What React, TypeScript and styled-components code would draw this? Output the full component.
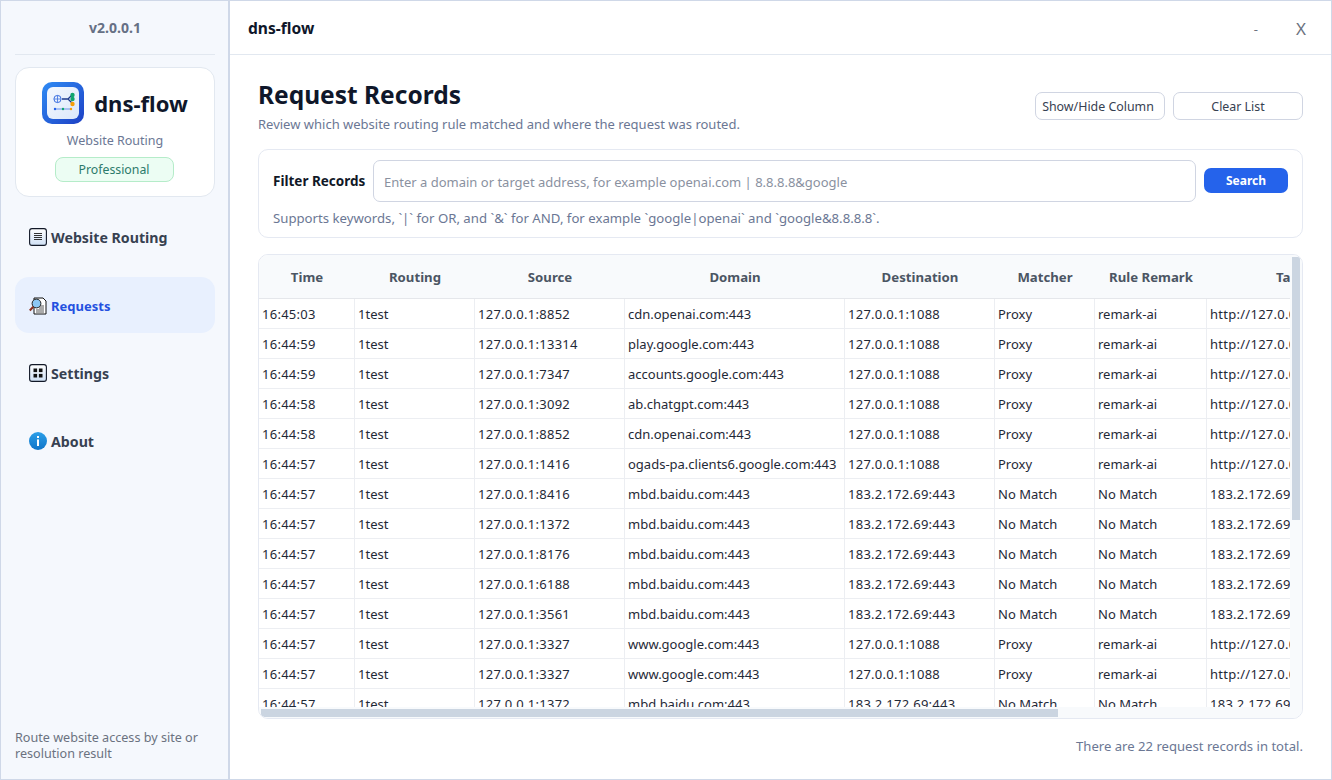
import React from "react";
import styled, { createGlobalStyle } from "styled-components";

const Global = createGlobalStyle`
  html, body { margin: 0; padding: 0; height: 100%; background: #fff; }
  #root { height: 100%; }
  * { box-sizing: border-box; }
  body { font-family: "Noto Sans", "Liberation Sans", sans-serif; color: #1f2937; }
`;

const Window = styled.div`
  width: 1332px; height: 780px; display: flex; overflow: hidden;
  border: 1px solid #cfd8e8; background: #fff;
`;
const Sidebar = styled.aside`
  width: 229px; flex: none; display: flex; flex-direction: column; padding: 0 13px 17px 14px;
  background: #f5f8fd; border-right: 2px solid #cfd8e8;
`;
const Version = styled.div`
  height: 54px; flex: none; display: flex; align-items: center; justify-content: center;
  font-size: 14px; font-weight: 700; color: #667085; border-bottom: 1px solid #e2e8f0;
`;
const BrandCard = styled.section`
  margin-top: 12px; height: 130px; flex: none; background: #fff; border: 1px solid #e2e8f0; border-radius: 14px;
  display: flex; flex-direction: column; align-items: center; padding-top: 14px;
`;
const BrandRow = styled.div`display: flex; align-items: center; gap: 10px; height: 42px;`;
const BrandName = styled.div`font-size: 22px; font-weight: 700; color: #0f172a; line-height: 1;`;
const BrandSub = styled.div`margin-top: 8px; font-size: 12.5px; line-height: 18px; color: #6b7794;`;
const Badge = styled.div`
  margin: 7px 2px 0 0; width: 119px; height: 25px; display: flex; align-items: center; justify-content: center;
  background: #ecfdf3; border: 1px solid #b5ecc9; border-radius: 8px; font-size: 12.3px; color: #2c7a6b;
`;
const Nav = styled.nav`margin-top: 12px; display: flex; flex-direction: column; gap: 12px;`;
const NavItem = styled.div<{ $active?: boolean }>`
  height: 56px; padding: ${(p) => (p.$active ? "2px" : "0")} 14px 0; border-radius: 14px;
  display: flex; align-items: center; gap: 4px;
  font-size: ${(p) => (p.$active ? "13px" : "14.2px")}; font-weight: 700;
  color: ${(p) => (p.$active ? "#2450e0" : "#374151")};
  background: ${(p) => (p.$active ? "#e8f0fe" : "transparent")};
`;
const SideNote = styled.div`margin-top: auto; font-size: 12.6px; line-height: 16px; color: #6b7280;`;

const Main = styled.main`flex: 1; min-width: 0; display: flex; flex-direction: column;`;
const TopBar = styled.header`
  height: 54px; flex: none; display: flex; align-items: center; padding: 0 25px 0 18px;
  border-bottom: 1px solid #e2e8f0;
`;
const TopTitle = styled.div`font-size: 15.6px; font-weight: 700; color: #0f172a;`;
const WinButtons = styled.div`margin-left: auto; display: flex; align-items: center; gap: 38px; color: #6b7280; padding-top: 2px;`;
const Minimize = styled.span`font-size: 13px;`;
const CloseX = styled.span`font-size: 17px;`;
const Page = styled.div`flex: 1; min-height: 0; display: flex; flex-direction: column; padding: 22px 28px 0 28px;`;
const Head = styled.div`height: 57px; flex: none; display: flex; justify-content: space-between;`;
const PageTitle = styled.h1`margin: 1px 0 0; font-size: 24.5px; line-height: 34px; font-weight: 700; color: #0f172a;`;
const PageSub = styled.p`margin: 3px 0 0; font-size: 13px; line-height: 18px; color: #6b7794;`;
const HeadButtons = styled.div`display: flex; gap: 8px; padding-top: 15px;`;
const GhostButton = styled.button<{ $offset?: boolean }>`
  width: 130px; height: 28px; padding: 0 ${(p) => (p.$offset ? "4px" : "0")} 0 0; background: #fff;
  border: 1px solid #d0d5e2; border-radius: 7px;
  font: 400 12.4px "Noto Sans", sans-serif; color: #374151;
`;
const FilterCard = styled.section`
  margin-top: 15px; height: 89px; flex: none; border: 1px solid #e5e9f2; border-radius: 10px; padding: 10px 14px 0;
`;
const FilterRow = styled.div`display: flex; align-items: center; height: 42px;`;
const FilterLabel = styled.label`width: 100px; flex: none; font-size: 13.5px; font-weight: 700; color: #111827;`;
const FilterInput = styled.input`
  flex: 1; min-width: 0; height: 42px; padding: 2px 10px 0; border: 1px solid #d0d5e2; border-radius: 7px; outline: none;
  font: 400 13px "Noto Sans", sans-serif;
  &::placeholder { color: #8a919f; opacity: 1; }
`;
const SearchButton = styled.button`
  margin: 0 0 1px 8px; width: 84px; height: 25px; flex: none; border: 0; border-radius: 7px; background: #2563eb;
  font: 700 12px "Noto Sans", sans-serif; color: #fff;
`;
const Hint = styled.div`margin-top: 7px; font-size: 13.2px; line-height: 18px; color: #6b7794;`;
const TableFrame = styled.section`
  margin-top: 16px; height: 465px; flex: none; border: 1px solid #e5e9f2; border-radius: 10px; overflow: hidden;
  display: grid; grid-template-columns: 1fr 12px; grid-template-rows: 1fr 11px; background: #fff;
`;
const TableScroll = styled.div`min-width: 0; min-height: 0; overflow: hidden;`;
const VTrack = styled.div`background: #f8fafc; padding: 2px 2px 0;`;
const HTrack = styled.div`background: #f8fafc; padding: 2px 0 0 2px;`;
const VThumb = styled.div`width: 8px; height: 263px; background: #cbd5e1;`;
const HThumb = styled.div`width: 797px; height: 8px; background: #cbd5e1;`;
const Table = styled.table`
  border-collapse: separate; border-spacing: 0; table-layout: fixed; width: 1128px;
`;
const Th = styled.th`
  height: 44px; padding: 0; background: #f8fafc;
  border-bottom: 1px solid #e5e7eb; font-size: 13.2px; font-weight: 700; color: #4b5563; text-align: center;
`;
const Td = styled.td<{ $num?: boolean }>`
  height: 30px; padding: 0 3px; border-right: 1px solid #eceef2; border-bottom: 1px solid #eceef2;
  font-size: 13px; color: #1f2937; white-space: nowrap; overflow: hidden;
  letter-spacing: ${(p) => (p.$num ? "0.27px" : "0")};
`;
const Total = styled.div`
  flex: 1; display: flex; align-items: center; justify-content: flex-end; padding-bottom: 7px;
  font-size: 13.1px; color: #6b7794;
`;

const LogoIcon = () => (
  <svg width="42" height="42" viewBox="0 0 42 42">
    <defs>
      <linearGradient id="lg" x1="0" y1="0" x2="1" y2="1">
        <stop offset="0" stopColor="#2f8cf5" />
        <stop offset="1" stopColor="#1d3fc4" />
      </linearGradient>
      <linearGradient id="li" x1="0" y1="0" x2="1" y2="1">
        <stop offset="0" stopColor="#f4f8fe" />
        <stop offset="1" stopColor="#dbe8fb" />
      </linearGradient>
    </defs>
    <rect width="42" height="42" rx="10" fill="url(#lg)" />
    <rect x="5" y="5" width="32" height="32" rx="6" fill="url(#li)" />
    <circle cx="15.5" cy="17" r="3.6" fill="none" stroke="#3b6fe0" strokeWidth="1" />
    <path d="M12 17h7M15.5 13.4v7.2" stroke="#3b6fe0" strokeWidth=".8" />
    <path d="M20 17h6l4-4M26 17l4 4" fill="none" stroke="#1e3a8a" strokeWidth="1.3" />
    <circle cx="30.5" cy="13" r="2.2" fill="#10a56e" />
    <circle cx="30.5" cy="17" r="2.2" fill="#10a56e" />
    <circle cx="30.5" cy="22" r="2.2" fill="#f59e0b" />
    <path d="M12 27h18" stroke="#4b7be5" strokeWidth=".8" />
    <circle cx="13" cy="27" r="1.2" fill="#2563eb" />
    <circle cx="21" cy="27" r="1.2" fill="#10a56e" />
    <circle cx="29" cy="27" r="1.2" fill="#f59e0b" />
  </svg>
);
const KeyFrame = ({ children }: { children: React.ReactNode }) => (
  <svg width="18" height="18" viewBox="0 0 18 18" style={{ flex: "none" }}>
    <defs>
      <linearGradient id="kf" x1="0" y1="0" x2="0" y2="1">
        <stop offset="0" stopColor="#fff" />
        <stop offset="1" stopColor="#cfe0f5" />
      </linearGradient>
    </defs>
    <rect x=".6" y=".6" width="16.8" height="16.8" rx="2.4" fill="url(#kf)" stroke="#111827" strokeWidth="1.1" />
    {children}
  </svg>
);
const RoutingIcon = () => (
  <KeyFrame>
    <path d="M5 5.5h8M5 7.5h8M5 9.5h8M5 11.5h8" stroke="#333" strokeWidth="1.1" />
  </KeyFrame>
);
const SettingsIcon = () => (
  <KeyFrame>
    <rect x="4.5" y="4.5" width="3.6" height="3.6" fill="#111" />
    <rect x="9.9" y="4.5" width="3.6" height="3.6" fill="#111" />
    <rect x="4.5" y="9.9" width="3.6" height="3.6" fill="#111" />
    <rect x="9.9" y="9.9" width="3.6" height="3.6" fill="#111" />
  </KeyFrame>
);
const RequestsIcon = () => (
  <svg width="18" height="18" viewBox="0 0 18 18" style={{ flex: "none" }}>
    <path d="M5 1h9l3 3v13H5z" fill="#fff" stroke="#111" strokeWidth="1" />
    <path d="M10 9h5M10 11h5M7 13h8M7 15h8" stroke="#444" strokeWidth=".9" />
    <circle cx="7.5" cy="6.5" r="4.4" fill="#8cc8f5" stroke="#222" strokeWidth="1" />
    <path d="M4.3 9.8L.8 13.5" stroke="#8a2f1d" strokeWidth="2" />
  </svg>
);
const InfoIcon = () => (
  <svg width="18" height="18" viewBox="0 0 18 18" style={{ flex: "none" }}>
    <defs>
      <linearGradient id="ii" x1="0" y1="0" x2="0" y2="1">
        <stop offset="0" stopColor="#2c9fe8" />
        <stop offset="1" stopColor="#0f74c8" />
      </linearGradient>
    </defs>
    <circle cx="9" cy="9" r="9" fill="url(#ii)" />
    <rect x="8" y="7.4" width="2" height="6.6" fill="#fff" />
    <rect x="8" y="4" width="2" height="2" fill="#fff" />
  </svg>
);

const cols: [string, number][] = [
  ["Time", 96], ["Routing", 120], ["Source", 150], ["Domain", 220], ["Destination", 150],
  ["Matcher", 100], ["Rule Remark", 112], ["Target", 180],
];
const PX = "127.0.0.1:1088";
const B = "183.2.172.69:443";
const rows: [string, string, string, string][] = [
  ["16:45:03", "127.0.0.1:8852", "cdn.openai.com:443", PX],
  ["16:44:59", "127.0.0.1:13314", "play.google.com:443", PX],
  ["16:44:59", "127.0.0.1:7347", "accounts.google.com:443", PX],
  ["16:44:58", "127.0.0.1:3092", "ab.chatgpt.com:443", PX],
  ["16:44:58", "127.0.0.1:8852", "cdn.openai.com:443", PX],
  ["16:44:57", "127.0.0.1:1416", "ogads-pa.clients6.google.com:443", PX],
  ["16:44:57", "127.0.0.1:8416", "mbd.baidu.com:443", B],
  ["16:44:57", "127.0.0.1:1372", "mbd.baidu.com:443", B],
  ["16:44:57", "127.0.0.1:8176", "mbd.baidu.com:443", B],
  ["16:44:57", "127.0.0.1:6188", "mbd.baidu.com:443", B],
  ["16:44:57", "127.0.0.1:3561", "mbd.baidu.com:443", B],
  ["16:44:57", "127.0.0.1:3327", "www.google.com:443", PX],
  ["16:44:57", "127.0.0.1:3327", "www.google.com:443", PX],
  ["16:44:57", "127.0.0.1:1372", "mbd.baidu.com:443", B],
];

export default function App() {
  return (
    <Window>
      <Global />
      <Sidebar>
        <Version>v2.0.0.1</Version>
        <BrandCard>
          <BrandRow><LogoIcon /><BrandName>dns-flow</BrandName></BrandRow>
          <BrandSub>Website Routing</BrandSub>
          <Badge>Professional</Badge>
        </BrandCard>
        <Nav>
          <NavItem><RoutingIcon />Website Routing</NavItem>
          <NavItem $active><RequestsIcon />Requests</NavItem>
          <NavItem><SettingsIcon />Settings</NavItem>
          <NavItem><InfoIcon />About</NavItem>
        </Nav>
        <SideNote>Route website access by site or resolution result</SideNote>
      </Sidebar>
      <Main>
        <TopBar>
          <TopTitle>dns-flow</TopTitle>
          <WinButtons><Minimize>-</Minimize><CloseX>X</CloseX></WinButtons>
        </TopBar>
        <Page>
          <Head>
            <div>
              <PageTitle>Request Records</PageTitle>
              <PageSub>Review which website routing rule matched and where the request was routed.</PageSub>
            </div>
            <HeadButtons>
              <GhostButton $offset>Show/Hide Column</GhostButton>
              <GhostButton>Clear List</GhostButton>
            </HeadButtons>
          </Head>
          <FilterCard>
            <FilterRow>
              <FilterLabel>Filter Records</FilterLabel>
              <FilterInput placeholder="Enter a domain or target address, for example openai.com | 8.8.8.8&google" />
              <SearchButton>Search</SearchButton>
            </FilterRow>
            <Hint>Supports keywords, `|` for OR, and `&` for AND, for example `google|openai` and `google&8.8.8.8`.</Hint>
          </FilterCard>
          <TableFrame>
            <TableScroll>
              <Table>
                <colgroup>{cols.map(([n, w]) => <col key={n} style={{ width: w }} />)}</colgroup>
                <thead><tr>{cols.map(([n]) => <Th key={n}>{n}</Th>)}</tr></thead>
                <tbody>
                  {rows.map((r, i) => {
                    const proxy = r[3] === PX;
                    return (
                      <tr key={i}>
                        <Td $num>{r[0]}</Td><Td>1test</Td><Td $num>{r[1]}</Td><Td>{r[2]}</Td><Td $num>{r[3]}</Td>
                        <Td>{proxy ? "Proxy" : "No Match"}</Td>
                        <Td>{proxy ? "remark-ai" : "No Match"}</Td>
                        <Td $num>{proxy ? "http://127.0.0.1:1088" : r[3]}</Td>
                      </tr>
                    );
                  })}
                </tbody>
              </Table>
            </TableScroll>
            <VTrack><VThumb /></VTrack>
            <HTrack><HThumb /></HTrack>
            <VTrack />
          </TableFrame>
          <Total>There are 22 request records in total.</Total>
        </Page>
      </Main>
    </Window>
  );
}
